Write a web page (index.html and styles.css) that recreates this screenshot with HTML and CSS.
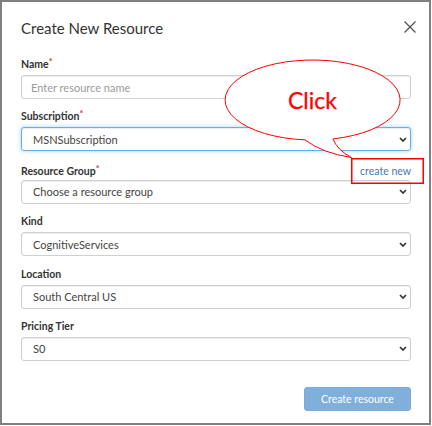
FILE: index.html
```html
<!DOCTYPE html>
<html lang="en">
<head>
<meta charset="utf-8">
<title>Create New Resource</title>
<link rel="stylesheet" href="styles.css">
</head>
<body>
<div class="dialog">
  <div class="header">
    <h1 class="title">Create New Resource</h1>
    <button class="close" type="button" aria-label="Close">
      <svg width="12" height="12" viewBox="0 0 12 12"><path d="M0.5 0.5 L11.5 11.5 M11.5 0.5 L0.5 11.5" stroke="#4a4a4a" stroke-width="1.1" fill="none"/></svg>
    </button>
  </div>
  <div class="form">
    <div class="field">
      <div class="label-row"><span class="label">Name<span class="req">*</span></span></div>
      <div class="control input placeholder">Enter resource name</div>
    </div>
    <div class="field">
      <div class="label-row"><span class="label">Subscription<span class="req">*</span></span></div>
      <div class="control select focused"><span>MSNSubscription</span><svg class="chev" width="8" height="5" viewBox="0 0 8 5"><path d="M1 1 L4 4 L7 1" stroke="#333" stroke-width="1.7" fill="none"/></svg></div>
    </div>
    <div class="field">
      <div class="label-row"><span class="label">Resource Group<span class="req">*</span></span><a class="link" href="#">create new</a></div>
      <div class="control select"><span>Choose a resource group</span><svg class="chev" width="8" height="5" viewBox="0 0 8 5"><path d="M1 1 L4 4 L7 1" stroke="#333" stroke-width="1.7" fill="none"/></svg></div>
    </div>
    <div class="field">
      <div class="label-row"><span class="label">Kind</span></div>
      <div class="control select"><span>CognitiveServices</span><svg class="chev" width="8" height="5" viewBox="0 0 8 5"><path d="M1 1 L4 4 L7 1" stroke="#333" stroke-width="1.7" fill="none"/></svg></div>
    </div>
    <div class="field">
      <div class="label-row"><span class="label">Location</span></div>
      <div class="control select"><span>South Central US</span><svg class="chev" width="8" height="5" viewBox="0 0 8 5"><path d="M1 1 L4 4 L7 1" stroke="#333" stroke-width="1.7" fill="none"/></svg></div>
    </div>
    <div class="field">
      <div class="label-row"><span class="label">Pricing Tier</span></div>
      <div class="control select"><span>S0</span><svg class="chev" width="8" height="5" viewBox="0 0 8 5"><path d="M1 1 L4 4 L7 1" stroke="#333" stroke-width="1.7" fill="none"/></svg></div>
    </div>
  </div>
  <div class="footer">
    <button class="primary" type="button">Create resource</button>
  </div>
  <svg class="callout" width="432" height="426" viewBox="0 0 432 426">
    <path d="M333 138.9 A87.5 40 0 1 0 305 139.85 Q 322 153 351.5 157.5 Q 337 150 333 138.9 Z" fill="#fff" stroke="#ff0000" stroke-width="1"/>
    <text x="312.5" y="109" text-anchor="middle" class="click">Click</text>
    <rect x="351.75" y="158.75" width="71.5" height="24.5" fill="none" stroke="#ff0000" stroke-width="1.5"/>
  </svg>
</div>
</body>
</html>
```
FILE: styles.css
```css
* { box-sizing: border-box; }
body {
  margin: 0;
  background: #fff;
  font-family: Lato, "Liberation Sans", sans-serif;
}
.dialog {
  position: relative;
  width: 431px;
  height: 425px;
  border: 2px solid #808080;
  padding: 15px 18px 0 19px;
  display: flex;
  flex-direction: column;
}
.header {
  display: flex;
  justify-content: space-between;
  align-items: flex-start;
}
.title {
  margin: 0;
  font-size: 15px;
  font-weight: 400;
  line-height: 22px;
  color: #333;
}
.close {
  margin: 4px -5px 0 0;
  padding: 0;
  border: 0;
  background: none;
  width: 12px;
  height: 12px;
  display: block;
}
.close svg { display: block; }
.form {
  margin-top: 18px;
  display: flex;
  flex-direction: column;
  gap: 10.4px;
}
.label-row {
  display: flex;
  justify-content: space-between;
  align-items: baseline;
  height: 14px;
  margin-bottom: 4px;
}
.label {
  font-size: 10.5px;
  font-weight: 700;
  line-height: 14px;
  color: #333;
}
.req {
  color: #e0303a;
  font-size: 9px;
  vertical-align: top;
  line-height: 10px;
}
.link {
  font-size: 10.5px;
  line-height: 14px;
  color: #4a78b4;
  text-decoration: none;
  margin-top: 2px;
}
.control {
  height: 24px;
  border: 1px solid #cfcfcf;
  border-radius: 3px;
  box-shadow: inset 0 1px 1px rgba(0,0,0,0.075);
  display: flex;
  align-items: center;
  justify-content: space-between;
  font-size: 11px;
  color: #444;
  background: #fff;
}
.input { padding-left: 9px; }
.placeholder { color: #9a9a9a; }
.select { padding: 0 3px 0 11px; }
.focused {
  border-color: #66afe9;
  box-shadow: inset 0 1px 1px rgba(0,0,0,0.075), 0 0 4px rgba(102,175,233,0.6);
}
.chev { display: block; }
.footer {
  margin-top: 26px;
  display: flex;
  justify-content: flex-end;
}
.primary {
  width: 107px;
  height: 24px;
  border: 1px solid #7aabd8;
  border-radius: 3px;
  background: #7fb0dc;
  color: #fff;
  font-family: Lato, "Liberation Sans", sans-serif;
  font-size: 10.5px;
  padding: 0;
}
.callout {
  position: absolute;
  left: -2px;
  top: -2px;
  pointer-events: none;
  overflow: visible;
}
.click {
  font-family: Lato, "Liberation Sans", sans-serif;
  font-size: 23px;
  font-weight: 400;
  fill: #ff0000;
  stroke: #ff0000;
  stroke-width: 0.25px;
}
```
